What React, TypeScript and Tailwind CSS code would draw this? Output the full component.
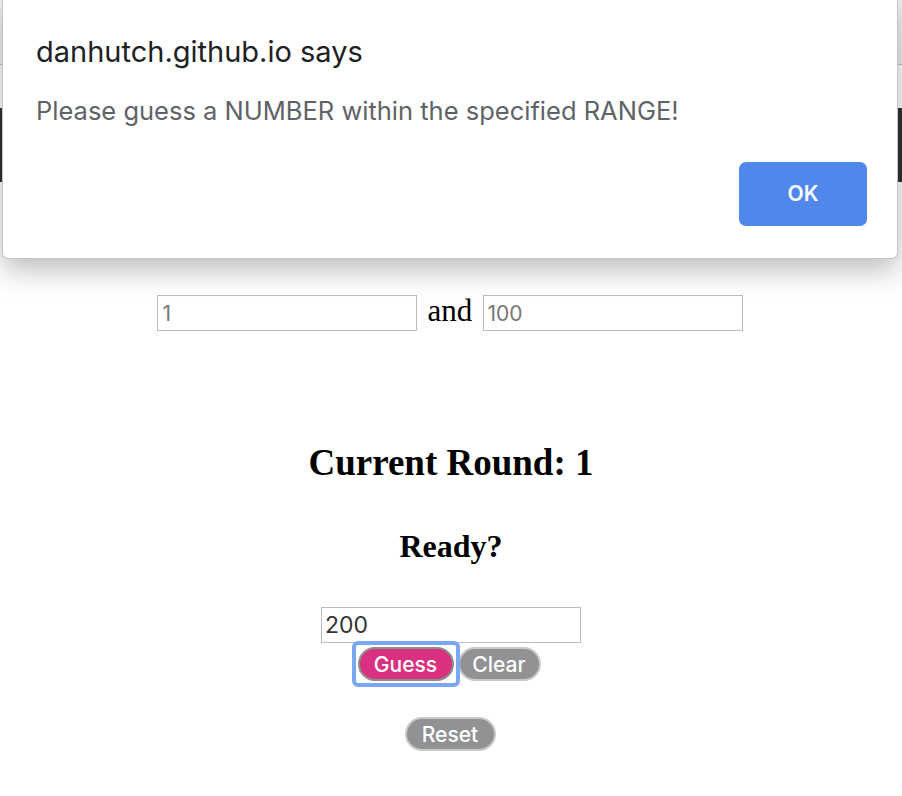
import React from 'react';

const sans = "font-['Inter','Roboto',sans-serif]";
const serif = "font-['Liberation_Serif','Times_New_Roman',serif]";

const pill =
	'rounded-full border-2 border-[#c9c9cb] bg-[#929295] text-white text-[21px] font-medium leading-none h-[34px] px-[12px]';

const App = () => {
	return (
		<div className="relative min-h-[796px] w-full bg-white overflow-hidden">
			{/* page header behind the alert */}
			<div className="h-[65px] bg-[#f1f1f1] border-b border-[#bdbdbd]" />
			<div className="h-[43px] bg-white" />
			<div className="h-[74px] bg-[#333333]" />

			<main className={`${serif} flex flex-col items-center text-black`}>
				<div className="mt-[113px] h-[36px] flex items-center gap-[11px] -ml-[2px]">
					<input
						className={`${sans} w-[260px] h-[36px] border border-[#bdbdbd] px-[5px] text-[21px] text-[#777] outline-none`}
						defaultValue="1"
					/>
					<span className="text-[31px] leading-none -mt-[5px]">and</span>
					<input
						className={`${sans} w-[260px] h-[36px] border border-[#bdbdbd] px-[3px] text-[21px] text-[#777] outline-none`}
						defaultValue="100"
					/>
				</div>

				<h2 className="mt-[113px] text-[37px] font-bold leading-none">Current Round: 1</h2>
				<h3 className="mt-[49px] text-[32px] font-bold leading-none">Ready?</h3>

				<input
					className={`${sans} mt-[45px] w-[260px] h-[36px] border border-[#bdbdbd] px-[3px] text-[23px] text-[#333] outline-none`}
					defaultValue="200"
				/>
				<div className={`${sans} mt-[4px] flex items-center gap-[4px] -ml-[4px]`}>
					<button className="relative rounded-full border-2 border-[#8d8d8d] bg-[#d9307f] text-white text-[21px] font-medium leading-none h-[34px] w-[96px]">
						Guess
						<span className="absolute -inset-[8px] z-10 rounded-[6px] border-[4px] border-[#7aa7f2]" />
					</button>
					<button className={`${pill} w-[83px]`}>Clear</button>
				</div>
				<button className={`${sans} ${pill} mt-[36px] w-[91px] -ml-[2px]`}>Reset</button>
			</main>

			{/* alert dialog */}
			<div
				className={`${sans} absolute left-[2px] right-[4px] top-0 h-[259px] bg-white rounded-b-[6px] border-b border-x border-[#c4c4c4] shadow-[0_10px_30px_rgba(0,0,0,0.28)] flex flex-col`}
			>
				<p className="mt-[37px] ml-[33px] text-[29px] leading-none text-[#202124]">danhutch.github.io says</p>
				<p className="mt-[32px] ml-[33px] text-[25.5px] leading-none text-[#5f6368]">
					Please guess a NUMBER within the specified RANGE!
				</p>
				<div className="mt-auto mb-[32px] mr-[30px] flex justify-end">
					<button className="w-[128px] h-[64px] rounded-[7px] bg-[#4f88ea] text-white text-[21px] font-semibold">
						OK
					</button>
				</div>
			</div>
		</div>
	);
};

export default App;
